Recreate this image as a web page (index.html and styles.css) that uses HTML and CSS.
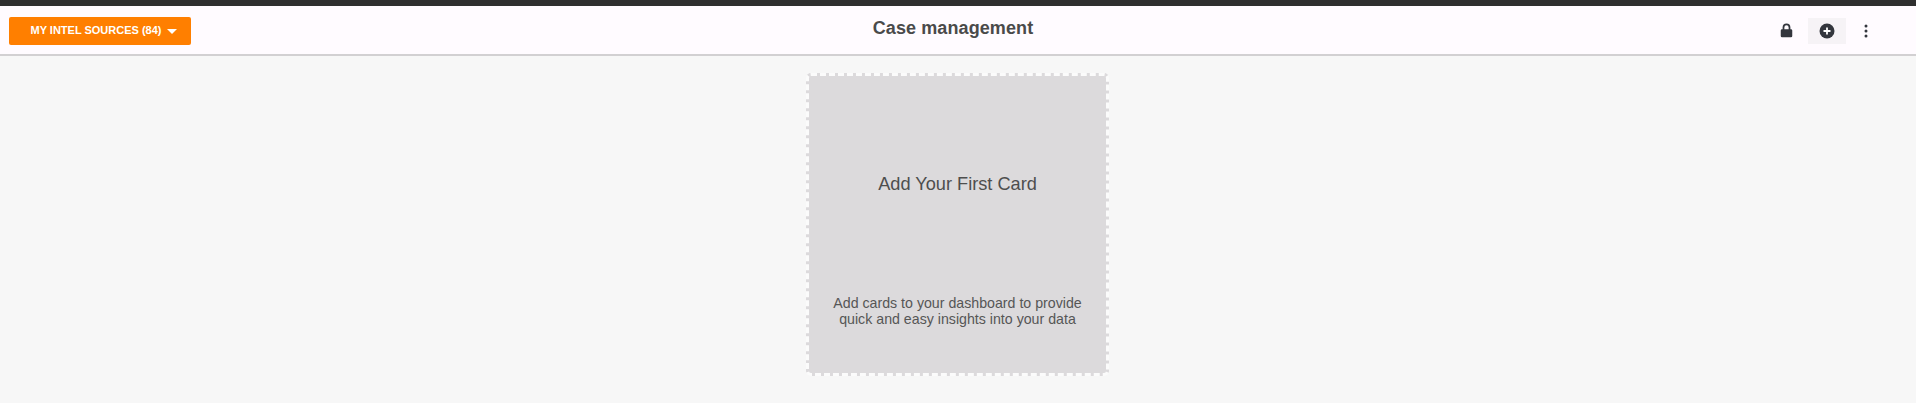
FILE: index.html
```html
<!DOCTYPE html>
<html lang="en">
<head>
<meta charset="utf-8">
<title>Case management</title>
<link rel="stylesheet" href="styles.css">
</head>
<body>
<div class="app">
  <div class="topstrip"></div>
  <header class="header">
    <div class="header-left">
      <button class="sources-btn"><span class="btn-label">MY INTEL SOURCES (84)</span><span class="caret"></span></button>
    </div>
    <h1 class="title">Case management</h1>
    <div class="header-right">
      <span class="icon-btn lock">
        <svg width="13" height="15" viewBox="0 0 14 16"><path fill="#33363d" d="M7 0.5A4.2 4.2 0 0 0 2.8 4.7V6.6H2.2A1.4 1.4 0 0 0 0.8 8V14A1.4 1.4 0 0 0 2.2 15.400H11.800A1.400 1.400 0 0 0 13.200 14V8A1.400 1.400 0 0 0 11.800 6.600H11.200V4.700A4.200 4.200 0 0 0 7 0.500ZM4.700 6.600V4.700A2.300 2.300 0 0 1 9.300 4.700V6.600Z"/></svg>
      </span>
      <span class="icon-btn add">
        <svg width="16" height="16" viewBox="0 0 16 16"><circle cx="8" cy="8" r="7.500" fill="#33363d"/><path d="M8 4.500V11.500M4.500 8H11.500" stroke="#fff" stroke-width="1.800"/></svg>
      </span>
      <span class="icon-btn more">
        <svg width="4" height="14" viewBox="0 0 4 14"><circle cx="2" cy="2" r="1.500" fill="#33363d"/><circle cx="2" cy="7" r="1.500" fill="#33363d"/><circle cx="2" cy="12" r="1.500" fill="#33363d"/></svg>
      </span>
    </div>
  </header>
  <main class="content">
    <section class="empty-card">
      <h2 class="card-title">Add Your First Card</h2>
      <p class="card-text">Add cards to your dashboard to provide<br>quick and easy insights into your data</p>
    </section>
  </main>
</div>
</body>
</html>
```

FILE: styles.css
```css
* { box-sizing: border-box; }
html, body { margin: 0; height: 100%; background: #fff; overflow: hidden; }
body { font-family: "Liberation Sans", Arial, sans-serif; color: #4a4a4a; }
.app { width: 1916px; height: 403px; display: flex; flex-direction: column; background: #f7f7f7; }
.topstrip { height: 6px; background: #2f2f2f; flex: none; }
.header {
  height: 50px; flex: none; display: grid; grid-template-columns: 1fr auto 1fr;
  background: #fffbff; border-bottom: 2px solid #d2d0d2; padding: 0 0 0 9px;
}
.header-left { padding-top: 11px; }
.sources-btn {
  width: 182px; height: 28px; border: 0; border-radius: 2px; background: #ff7f00; color: #fff;
  font: bold 11px "Liberation Sans", Arial, sans-serif; padding: 0 0 0 7px; display: flex; align-items: center; justify-content: center; gap: 5px;
}
.btn-label { margin-top: -2px; }
.caret { width: 0; height: 0; border-left: 5px solid transparent; border-right: 5px solid transparent; border-top: 5px solid #fff; }
.title { margin: 12px 19px 0 0; font-size: 18px; line-height: 21px; font-weight: bold; color: #4a4a4a; letter-spacing: .1px; }
.header-right { display: flex; justify-content: flex-end; align-items: flex-start; padding-top: 12px; padding-right: 48px; }
.icon-btn { display: flex; align-items: center; justify-content: center; height: 26px; }
.lock { width: 14px; margin-right: 15px; padding-bottom: 2px; }
.add { width: 38px; background: #f6f3f6; margin-right: 18px; }
.more { width: 4px; padding-bottom: 1px; }
.content { flex: 1; display: flex; justify-content: center; padding: 17px 1px 0 0; }
.empty-card {
  width: 303px; height: 303px; background: #dcdadc; border: 3px dashed #fbfbfb; border-radius: 5px;
  display: flex; flex-direction: column; align-items: center; text-align: center; padding-top: 96px;
}
.card-title { margin: 0; font-size: 18.2px; line-height: 24px; font-weight: normal; color: #4e4e4e; }
.card-text { margin: 99px 0 0; font-size: 14.2px; line-height: 16px; color: #565656; }
```
